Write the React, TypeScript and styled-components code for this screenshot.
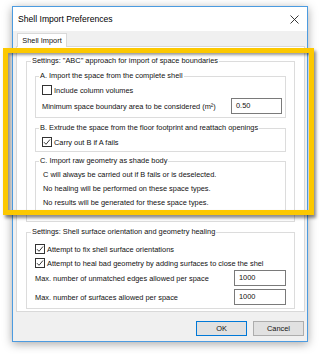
import styled, { createGlobalStyle } from "styled-components";

const GlobalStyle = createGlobalStyle`
  html, body {
    margin: 0;
    padding: 0;
    background: #ffffff;
  }
  body {
    font-family: "Liberation Sans", Arial, sans-serif;
    font-size: 7.4px;
    color: #111;
  }
`;

function Check({ checked }: { checked?: boolean }) {
  return (
    <Box>
      {checked && (
        <svg width="8" height="8" viewBox="0 0 8 8">
          <path d="M1 4.2 L3 6.3 L7 1.5" fill="none" stroke="#222" strokeWidth="0.9" />
        </svg>
      )}
    </Box>
  );
}

export default function App() {
  return (
    <Page>
      <GlobalStyle />
      <Window>
        <TitleBar>
          <Title>Shell Import Preferences</Title>
          <Close>
            <svg width="9" height="9" viewBox="0 0 9 9">
              <path d="M0.5 0.5 L8.5 8.5 M8.5 0.5 L0.5 8.5" stroke="#222" strokeWidth="0.9" />
            </svg>
          </Close>
        </TitleBar>
        <Body>
          <Tabs>
            <Tab>Shell Import</Tab>
          </Tabs>
          <Panel>
            <Group $pad="0 8px 8px 8px">
              <Legend $left={-4}>Settings: "ABC" approach for import of space boundaries</Legend>
              <Group $pad="0 3px 3px 6px" $top={5}>
                <Legend $left={-3}>A. Import the space from the complete shell</Legend>
                <Row $h={10} $top={4}>
                  <Check />
                  <Label>Include column volumes</Label>
                </Row>
                <Row $h={16} $top={3}>
                  <Label>Minimum space boundary area to be considered (m²)</Label>
                  <Input $w={51}>0.50</Input>
                </Row>
              </Group>
              <Group $pad="0 3px 4px 6px" $top={5}>
                <Legend $left={-3}>B. Extrude the space from the floor footprint and reattach openings</Legend>
                <Row $h={10} $top={4}>
                  <Check checked />
                  <Label>Carry out B if A fails</Label>
                </Row>
              </Group>
              <Group $pad="2px 3px 2px 7px" $top={4}>
                <Legend $left={-4}>C. Import raw geometry as shade body</Legend>
                <Line>C will always be carried out if B fails or is deselected.</Line>
                <Line>No healing will be performed on these space types.</Line>
                <Line>No results will be generated for these space types.</Line>
              </Group>
            </Group>
            <Group $pad="5px 8px 3px 8px" $top={5}>
              <Legend $left={-4}>Settings: Shell surface orientation and geometry healing</Legend>
              <Row $h={14} $top={0}>
                <Check checked />
                <Label>Attempt to fix shell surface orientations</Label>
              </Row>
              <Row $h={14} $top={0}>
                <Check checked />
                <Label>Attempt to heal bad geometry by adding surfaces to close the shel</Label>
              </Row>
              <Row $h={16} $top={0}>
                <Label>Max. number of unmatched edges allowed per space</Label>
                <Input $w={52}>1000</Input>
              </Row>
              <Row $h={16} $top={3}>
                <Label>Max. number of surfaces allowed per space</Label>
                <Input $w={52}>1000</Input>
              </Row>
            </Group>
          </Panel>
          <Buttons>
            <Button $primary>OK</Button>
            <Button>Cancel</Button>
          </Buttons>
        </Body>
      </Window>
      <Highlight />
    </Page>
  );
}

const Page = styled.div`
  position: relative;
  width: 321px;
  height: 354px;
  overflow: hidden;
  padding: 6px 0 0 12px;
  box-sizing: border-box;
`;

const Window = styled.div`
  width: 296px;
  height: 336px;
  box-sizing: border-box;
  border: 1px solid #4c9be0;
  background: #f0f0f0;
  box-shadow: 0 2px 9px rgba(0, 0, 0, 0.35);
  display: flex;
  flex-direction: column;
`;

const TitleBar = styled.div`
  height: 24px;
  background: #ffffff;
  display: flex;
  align-items: center;
  justify-content: space-between;
  padding: 0 8px 0 5px;
`;

const Title = styled.span`
  font-size: 8.6px;
  color: #000;
`;

const Close = styled.span`
  display: flex;
  align-items: center;
`;

const Body = styled.div`
  flex: 1;
  display: flex;
  flex-direction: column;
  padding: 2px 2px 0 3px;
`;

const Tabs = styled.div`
  display: flex;
  padding-left: 1px;
`;

const Tab = styled.div`
  height: 14px;
  width: 50px;
  box-sizing: border-box;
  background: #ffffff;
  border: 1px solid #d9d9d9;
  border-bottom: none;
  display: flex;
  align-items: center;
  justify-content: center;
  margin-bottom: -1px;
  position: relative;
  z-index: 1;
`;

const Panel = styled.div`
  height: 266px;
  box-sizing: border-box;
  background: #ffffff;
  border: 1px solid #d9d9d9;
  padding: 9px 9px 0 9px;
  display: flex;
  flex-direction: column;
`;

const Group = styled.fieldset<{ $pad: string; $top?: number }>`
  margin: ${(p) => p.$top ?? 0}px 0 0 0;
  padding: ${(p) => p.$pad};
  border: 1px solid #dcdcdc;
  min-width: 0;
  display: flex;
  flex-direction: column;
`;

const Legend = styled.legend<{ $left: number }>`
  margin-left: ${(p) => p.$left}px;
  padding: 0 1px;
  line-height: 10px;
  white-space: nowrap;
  color: #111;
`;

const Row = styled.div<{ $h: number; $top: number }>`
  height: ${(p) => p.$h}px;
  margin-top: ${(p) => p.$top}px;
  display: flex;
  align-items: center;
  white-space: nowrap;
`;

const Label = styled.span`
  flex: 1;
`;

const Box = styled.div`
  width: 10px;
  height: 10px;
  box-sizing: border-box;
  border: 1px solid #333;
  background: #fff;
  margin-right: 2px;
  display: flex;
  align-items: center;
  justify-content: center;
  flex: none;
`;

const Line = styled.div`
  height: 14px;
  line-height: 14px;
  white-space: nowrap;
`;

const Input = styled.div<{ $w: number }>`
  width: ${(p) => p.$w}px;
  height: 16px;
  box-sizing: border-box;
  border: 1px solid #7a7a7a;
  padding: 0 4px;
  line-height: 14px;
  background: #fff;
  flex: none;
`;

const Buttons = styled.div`
  display: flex;
  justify-content: flex-end;
  gap: 6px;
  margin-top: 9px;
  padding-right: 1px;
`;

const Button = styled.div<{ $primary?: boolean }>`
  width: 51px;
  height: 15px;
  box-sizing: border-box;
  background: #e1e1e1;
  border: 1px solid ${(p) => (p.$primary ? "#0078d7" : "#adadad")};
  display: flex;
  align-items: center;
  justify-content: center;
`;

const Highlight = styled.div`
  position: absolute;
  left: 3px;
  top: 48px;
  width: 311px;
  height: 167px;
  box-sizing: border-box;
  border: 5px solid #fcc800;
  box-shadow: 2px 3px 3px rgba(0, 0, 0, 0.45), inset 2px 2px 3px rgba(0, 0, 0, 0.4);
  pointer-events: none;
`;
